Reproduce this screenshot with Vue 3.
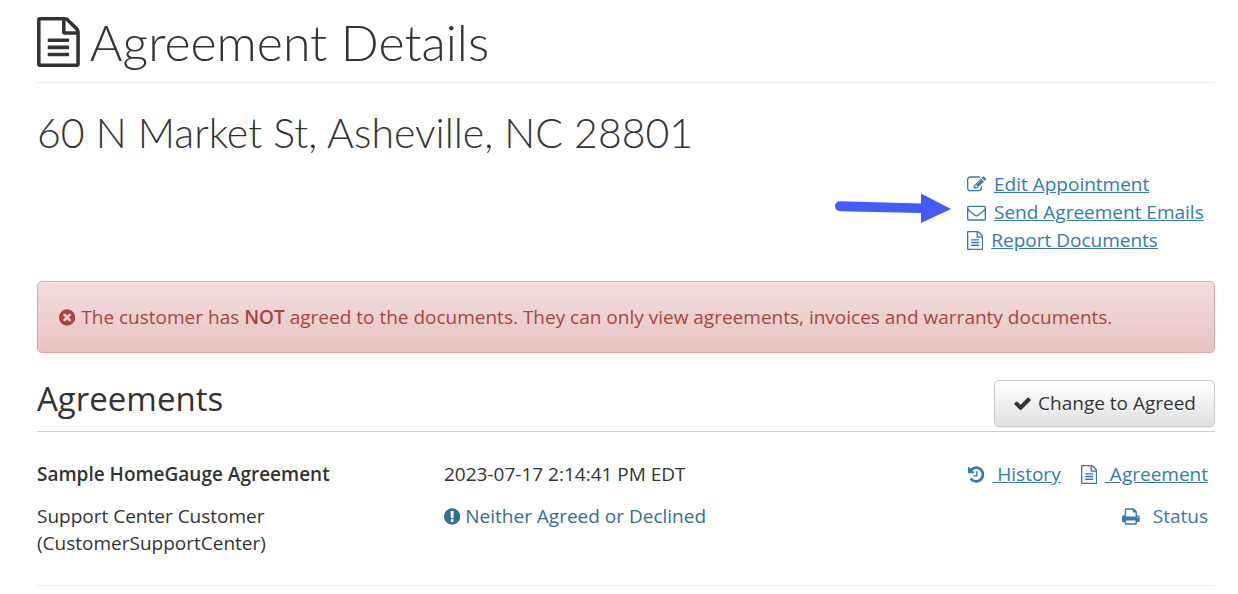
<script setup>
import { h } from 'vue'

const glyphs = {
  file: {
    box: '128 0 1536 1792',
    d: 'M1596 380q28 28 48 76t20 88v1152q0 40-28 68t-68 28h-1344q-40 0-68-28t-28-68v-1600q0-40 28-68t68-28h896q40 0 88 20t76 48zm-444-244v376h376q-10-29-22-41l-313-313q-12-12-41-22zm384 1528v-1024h-416q-40 0-68-28t-28-68v-416h-768v1536h1280zm-1024-864q0-14 9-23t23-9h704q14 0 23 9t9 23v64q0 14-9 23t-23 9h-704q-14 0-23-9t-9-23v-64zm736 224q14 0 23 9t9 23v64q0 14-9 23t-23 9h-704q-14 0-23-9t-9-23v-64q0-14 9-23t23-9h704zm0 256q14 0 23 9t9 23v64q0 14-9 23t-23 9h-704q-14 0-23-9t-9-23v-64q0-14 9-23t23-9h704z',
  },
  edit: {
    box: '0 0 1792 1792',
    d: 'M888 1184l116-116-152-152-116 116v56h96v96h56zm440-720q-16-16-33 1l-350 350q-17 17-1 33t33-1l350-350q17-17 1-33zm80 594v190q0 119-84.5 203.5t-203.5 84.5h-832q-119 0-203.5-84.5t-84.5-203.5v-832q0-119 84.5-203.5t203.5-84.5h832q63 0 117 25 15 7 18 23 3 17-9 29l-49 49q-14 14-32 8-23-6-45-6h-832q-66 0-113 47t-47 113v832q0 66 47 113t113 47h832q66 0 113-47t47-113v-126q0-13 9-22l64-64q15-15 35-7t20 29zm-96-738l288 288-672 672h-288v-288zm444 132l-92 92-288-288 92-92q28-28 68-28t68 28l152 152q28 28 28 68t-28 68z',
  },
  envelope: {
    box: '0 0 1792 1792',
    d: 'M1664 1504v-768q-32 36-69 66-268 206-426 338-51 43-83 67t-86.5 48.5-102.5 24.5h-2q-48 0-102.5-24.5t-86.5-48.5-83-67q-158-132-426-338-37-30-69-66v768q0 13 9.5 22.5t22.5 9.5h1472q13 0 22.5-9.5t9.5-22.5zm0-1051v-24.5l-.5-13-3-12.5-5.5-9-9-7.5-14-2.5h-1472q-13 0-22.5 9.5t-9.5 22.5q0 168 147 284 193 152 401 317 6 5 35 29.5t46 37.5 44.5 31.5 50.5 27.5 43 9h2q20 0 43-9t50.5-27.5 44.5-31.5 46-37.5 35-29.5q208-165 401-317 54-43 100.5-115.5t46.5-131.5zm128-37v1088q0 66-47 113t-113 47h-1472q-66 0-113-47t-47-113v-1088q0-66 47-113t113-47h1472q66 0 113 47t47 113z',
  },
  times: {
    box: '128 0 1536 1792',
    d: 'M1277 1122q0-26-19-45l-181-181 181-181q19-19 19-45 0-27-19-46l-90-90q-19-19-46-19-26 0-45 19l-181 181-181-181q-19-19-45-19-27 0-46 19l-90 90q-19 19-19 46 0 26 19 45l181 181-181 181q-19 19-19 45 0 27 19 46l90 90q19 19 46 19 26 0 45-19l181-181 181 181q19 19 45 19 27 0 46-19l90-90q19-19 19-46zm387-226q0 209-103 385.5t-279.5 279.5-385.5 103-385.5-103-279.5-279.5-103-385.5 103-385.5 279.5-279.5 385.5-103 385.5 103 279.5 279.5 103 385.5z',
  },
  exclamation: {
    box: '128 0 1536 1792',
    d: 'M896 128q209 0 385.5 103t279.5 279.5 103 385.5-103 385.5-279.5 279.5-385.5 103-385.5-103-279.5-279.5-103-385.5 103-385.5 279.5-279.5 385.5-103zm128 1247v-190q0-14-9-23.5t-22-9.5h-192q-13 0-23 10t-10 23v190q0 13 10 23t23 10h192q13 0 22-9.5t9-23.5zm-2-344l18-621q0-12-10-18-10-8-24-8h-220q-14 0-24 8-10 6-10 18l17 621q0 10 10 17.5t24 7.5h185q14 0 23.5-7.5t10.5-17.5z',
  },
  check: {
    box: '0 0 1792 1792',
    d: 'M1671 566q0 40-28 68l-724 724-136 136q-28 28-68 28t-68-28l-136-136-362-362q-28-28-28-68t28-68l136-136q28-28 68-28t68 28l294 295 656-657q28-28 68-28t68 28l136 136q28 28 28 68z',
  },
  history: {
    box: '128 0 1536 1792',
    d: 'M1664 896q0 156-61 298t-164 245-245 164-298 61q-172 0-327-72.5t-264-204.5q-7-10-6.5-22.5t8.5-20.5l137-138q10-9 25-9 16 2 23 12 73 95 179 147t225 52q104 0 198.5-40.5t163.5-109.5 109.5-163.5 40.5-198.5-40.5-198.5-109.5-163.5-163.5-109.5-198.5-40.5q-98 0-188 35.5t-160 101.5l137 138q31 30 14 69-17 40-59 40h-448q-26 0-45-19t-19-45v-448q0-42 40-59 39-17 69 14l130 129q107-101 244.5-156.5t284.5-55.5q156 0 298 61t245 164 164 245 61 298zm-640-288v448q0 14-9 23t-23 9h-320q-14 0-23-9t-9-23v-64q0-14 9-23t23-9h224v-352q0-14 9-23t23-9h64q14 0 23 9t9 23z',
  },
  print: {
    box: '64 0 1664 1792',
    d: 'M448 1536h896v-256h-896v256zm0-640h896v-384h-160q-40 0-68-28t-28-68v-160h-640v640zm1152 64q0-26-19-45t-45-19-45 19-19 45 19 45 45 19 45-19 19-45zm128 0v416q0 13-9.5 22.5t-22.5 9.5h-224v160q0 40-28 68t-68 28h-960q-40 0-68-28t-28-68v-160h-224q-13 0-22.5-9.5t-9.5-22.5v-416q0-79 56.5-135.5t135.5-56.5h64v-544q0-40 28-68t68-28h672q40 0 88 20t76 48l152 152q28 28 48 76t20 88v256h64q79 0 135.5 56.5t56.5 135.5z',
  },
}

const Icon = (props) =>
  h('svg', { viewBox: glyphs[props.name].box, 'aria-hidden': 'true' }, [
    h('path', { d: glyphs[props.name].d, fill: 'currentColor' }),
  ])
Icon.props = ['name']

const actions = [
  { icon: 'edit', label: 'Edit Appointment' },
  { icon: 'envelope', label: 'Send Agreement Emails', pointed: true },
  { icon: 'file', label: 'Report Documents' },
]
</script>

<template>
  <main class="page">
    <h1 class="title"><Icon name="file" class="title-icon" />Agreement Details</h1>
    <h2 class="address">60 N Market St, Asheville, NC 28801</h2>

    <ul class="actions">
      <li v-for="a in actions" :key="a.label" class="action">
        <svg v-if="a.pointed" class="arrow" viewBox="0 0 118 32" aria-hidden="true">
          <path d="M6 9.300L87 11.500V1.500L117 17L87 31V21L6 19.300A5 5 0 0 1 6 9.300Z" fill="#425cfc" />
        </svg>
        <a href="#"><Icon :name="a.icon" class="icon" /><span class="label">{{ a.label }}</span></a>
      </li>
    </ul>

    <div class="alert" role="alert">
      <Icon name="times" class="icon" />
      <p class="alert-text">The customer has <strong>NOT</strong> agreed to the documents. They can only view agreements, invoices and warranty documents.</p>
    </div>

    <header class="section-head">
      <h3 class="section-title">Agreements</h3>
      <button type="button" class="button"><Icon name="check" class="icon" />Change to Agreed</button>
    </header>

    <section class="agreement">
      <div class="row">
        <strong>Sample HomeGauge Agreement</strong>
        <span>2023-07-17 2:14:41 PM EDT</span>
        <nav class="links">
          <a href="#"><Icon name="history" class="icon" /><span class="label">&nbsp;History</span></a>
          <a href="#"><Icon name="file" class="icon" /><span class="label">&nbsp;Agreement</span></a>
        </nav>
      </div>
      <div class="row">
        <span>Support Center Customer<br />(CustomerSupportCenter)</span>
        <span class="pending"><Icon name="exclamation" class="icon" />Neither Agreed or Declined</span>
        <nav class="links">
          <a href="#" class="status"><Icon name="print" class="icon" /><span>Status</span></a>
        </nav>
      </div>
    </section>
  </main>
</template>

<style>
body {
  margin: 0;
  background: #fff;
}
</style>

<style scoped>
.page {
  padding: 10px 23px 8px 37px;
  color: #333;
  font-family: "Open Sans", sans-serif;
  font-size: 19px;
  font-weight: 400;
  line-height: 28px;
}

h1,
h2,
h3,
p,
ul {
  margin: 0;
  padding: 0;
  font-weight: inherit;
}

.icon {
  flex: none;
  height: 19px;
}

.title {
  display: flex;
  align-items: center;
  gap: 10px;
  padding-bottom: 8px;
  border-bottom: 1px solid #eee;
  font: 300 50px/64px Lato, sans-serif;
}

.title-icon {
  height: 50px;
}

.address {
  padding: 25px 0 12px;
  font: 300 41px/50px Lato, sans-serif;
}

.actions {
  width: 248px;
  margin-left: auto;
  list-style: none;
}

.action {
  position: relative;
}

.action a,
.links a {
  display: flex;
  align-items: center;
  gap: 8px;
  color: #337ab7;
  text-decoration: none;
}

.label {
  text-decoration: underline;
}

.arrow {
  position: absolute;
  right: 263px;
  top: -6px;
  width: 118px;
  height: 32px;
}

.alert {
  display: flex;
  align-items: center;
  gap: 6px;
  margin-top: 27px;
  padding: 21px;
  border: 1px solid #dca7a7;
  border-radius: 5px;
  background: linear-gradient(#f2dede, #e7c3c3);
  box-shadow: inset 0 1px 0 rgba(255, 255, 255, 0.25), 0 1px 2px rgba(0, 0, 0, 0.05);
  color: #a94442;
}

strong {
  font-weight: 600;
}

.section-head {
  display: flex;
  align-items: flex-start;
  justify-content: space-between;
  margin-top: 27px;
  padding-bottom: 4px;
  border-bottom: 1px solid #ccc;
}

.section-title {
  font-size: 33px;
  line-height: 38px;
}

.button {
  display: flex;
  align-items: center;
  gap: 6px;
  padding: 9px 18px;
  border: 1px solid #ccc;
  border-radius: 5px;
  background: linear-gradient(#fff, #e0e0e0);
  box-shadow: inset 0 1px 0 rgba(255, 255, 255, 0.15), 0 1px 1px rgba(0, 0, 0, 0.08);
  color: #333;
  font: inherit;
  line-height: 27px;
  text-shadow: 0 1px 0 #fff;
}

.agreement {
  display: grid;
  gap: 15px;
  padding: 29px 0 28px;
  border-bottom: 1px solid #eee;
  line-height: 27px;
}

.row {
  display: grid;
  grid-template-columns: 407px 1fr auto;
  align-items: start;
  padding-right: 7px;
}

.pending {
  display: flex;
  align-items: center;
  gap: 5px;
  color: #31708f;
}

.links {
  display: flex;
  gap: 20px;
}

.links .status {
  gap: 13px;
}
</style>
